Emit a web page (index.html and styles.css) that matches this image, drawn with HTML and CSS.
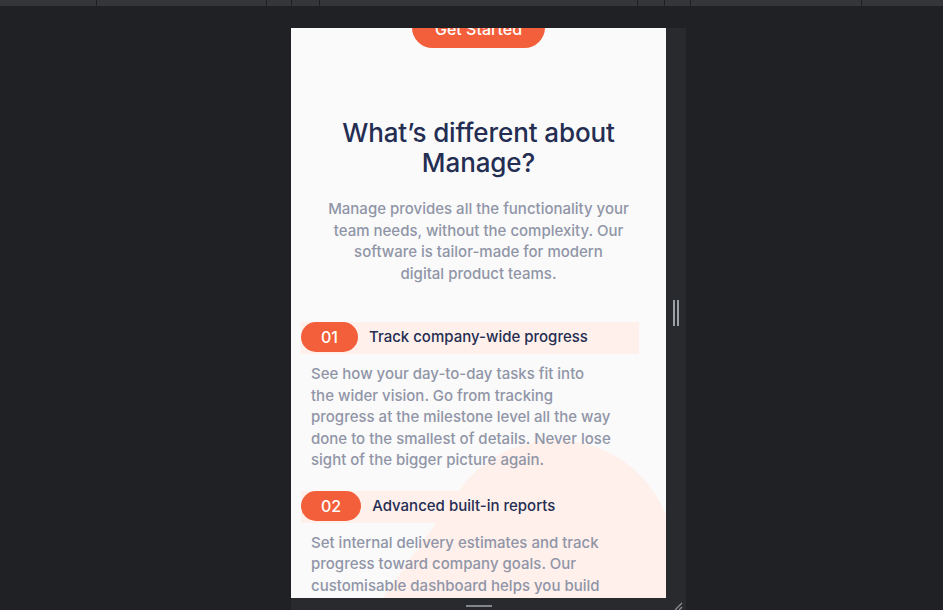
FILE: index.html
```html
<!DOCTYPE html>
<html lang="en">
<head>
<meta charset="utf-8">
<title>Manage – device preview</title>
<link rel="stylesheet" href="styles.css">
</head>
<body>
<div class="toolbar">
  <span class="seg"></span><span class="seg"></span><span class="seg"></span>
  <span class="seg"></span><span class="seg"></span><span class="seg"></span>
  <span class="seg"></span><span class="seg"></span><span class="seg"></span>
</div>
<div class="stage">
  <div class="device">
    <div class="device-row">
      <div class="viewport">
        <svg class="bg-pattern" width="375" height="570" viewBox="0 0 375 570" aria-hidden="true">
          <rect x="147" y="412" width="1000" height="236" rx="118" fill="#fff0eb" transform="rotate(125.5 265 530)"/>
        </svg>
        <main class="page">
          <a class="btn" href="#">Get Started</a>
          <section class="features">
            <h2 class="features-title">What’s different about Manage?</h2>
            <p class="intro">Manage provides all the functionality your team needs, without the complexity. Our software is tailor-made for modern<br>digital product teams.</p>
            <ol class="feature-list">
              <li class="feature">
                <div class="feature-head">
                  <span class="num">01</span>
                  <h3 class="feature-title">Track company-wide progress</h3>
                </div>
                <p class="feature-text">See how your day-to-day tasks fit into the wider vision. Go from tracking progress at the milestone level all the way done to the smallest of details. Never lose sight of the bigger picture again.</p>
              </li>
              <li class="feature">
                <div class="feature-head">
                  <span class="num">02</span>
                  <h3 class="feature-title">Advanced built-in reports</h3>
                </div>
                <p class="feature-text">Set internal delivery estimates and track progress toward company goals. Our customisable dashboard helps you build out the reports you need to keep key stakeholders informed.</p>
              </li>
            </ol>
          </section>
        </main>
      </div>
      <div class="side-handle"><span class="grip"></span></div>
    </div>
    <div class="bottom-handle">
      <span class="bar"></span>
      <svg class="corner" width="10" height="10" viewBox="0 0 10 10" aria-hidden="true">
        <path d="M2 10 L9 3 M6 10 L9 7" stroke="#8a8d92" stroke-width="1.3" fill="none"/>
      </svg>
    </div>
  </div>
</div>
</body>
</html>
```

FILE: styles.css
```css
* { box-sizing: border-box; }

html, body {
  margin: 0;
  padding: 0;
}

body {
  width: 943px;
  height: 610px;
  overflow: hidden;
  background: #202124;
  font-family: Inter, "Noto Sans", sans-serif;
}

/* DevTools top toolbar */
.toolbar {
  display: flex;
  height: 6px;
  background: #35363a;
}
.seg {
  height: 100%;
  border-right: 1px solid #1f2023;
}
.seg:nth-child(1) { width: 97px; }
.seg:nth-child(2) { width: 170px; }
.seg:nth-child(3) { width: 25px; }
.seg:nth-child(4) { width: 28px; }
.seg:nth-child(5) { width: 318px; }
.seg:nth-child(6) { width: 27px; }
.seg:nth-child(7) { width: 26px; }
.seg:nth-child(8) { width: 171px; }
.seg:nth-child(9) { flex: 1; border-right: 0; }

.stage {
  padding: 22px 0 0 291px;
}

.device {
  width: 395px;
  display: flex;
  flex-direction: column;
}

.device-row {
  display: flex;
  height: 570px;
}

.viewport {
  position: relative;
  width: 375px;
  height: 570px;
  overflow: hidden;
  background: #fafafa;
}

.bg-pattern {
  position: absolute;
  left: 0;
  top: 0;
}

.side-handle {
  width: 20px;
  background: #292a2d;
  display: flex;
  align-items: center;
  justify-content: center;
}
.grip {
  width: 6px;
  height: 26px;
  border-left: 2px solid #9aa0a6;
  border-right: 2px solid #9aa0a6;
}

.bottom-handle {
  position: relative;
  height: 12px;
  background: #292a2d;
  display: flex;
}
.bar {
  width: 26px;
  height: 2px;
  margin: 7px 0 0 175px;
  background: #80868b;
}
.corner {
  position: absolute;
  right: 3px;
  bottom: 0;
}

/* Page content */
.page {
  position: relative;
  margin-top: -21px;
  display: flex;
  flex-direction: column;
  align-items: center;
}

.btn {
  display: block;
  width: 133px;
  padding: 13px 0 9px;
  background: #f25f3a;
  color: #fff;
  text-decoration: none;
  font-size: 16px;
  font-weight: 500;
  line-height: 19px;
  border-radius: 22px;
  text-align: center;
  white-space: nowrap;
}

.features {
  width: 100%;
  display: flex;
  flex-direction: column;
  align-items: center;
}

.features-title {
  margin: 70px 0 0;
  width: 300px;
  text-align: center;
  font-size: 26px;
  line-height: 30px;
  font-weight: 500;
  color: #242d52;
  letter-spacing: -0.1px;
}

.intro {
  margin: 20px 0 0;
  width: 302px;
  text-align: center;
  font-size: 15px;
  line-height: 21.5px;
  font-weight: 500;
  color: #9095a7;
}

.feature-list {
  list-style: none;
  margin: 38px 0 0 10px;
  padding: 0;
  align-self: flex-start;
  width: 338px;
}

.feature + .feature {
  margin-top: 20px;
}

.feature-head {
  display: flex;
  align-items: flex-start;
  gap: 11px;
  height: 32px;
  background: #fff0eb;
}

.num {
  height: 30px;
  padding: 0 20px;
  border-radius: 15px;
  background: #f25f3a;
  color: #fff;
  font-size: 16px;
  font-weight: 500;
  line-height: 30px;
}

.feature-title {
  margin: 0;
  font-size: 15px;
  font-weight: 500;
  line-height: 30px;
  color: #242d52;
}

.feature-text {
  margin: 9px 0 0 10px;
  width: 300px;
  font-size: 15px;
  line-height: 21.5px;
  font-weight: 500;
  color: #9095a7;
}
```
